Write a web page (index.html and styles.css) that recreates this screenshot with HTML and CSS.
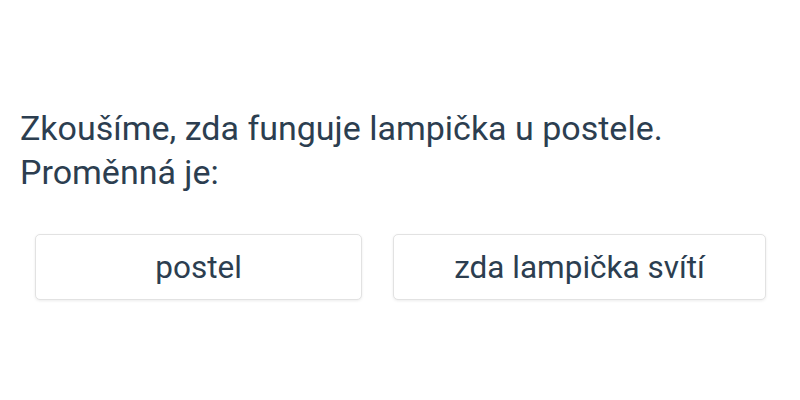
FILE: index.html
```html
<!DOCTYPE html>
<html lang="cs">
<head>
<meta charset="utf-8">
<link rel="stylesheet" href="styles.css">
</head>
<body>
<main class="page">
  <p class="question">Zkoušíme, zda funguje lampička u postele.<br>Proměnná je:</p>
  <div class="options">
    <button class="option option-a">postel</button>
    <button class="option option-b">zda lampička svítí</button>
  </div>
</main>
</body>
</html>
```
FILE: styles.css
```css
html, body {
  margin: 0;
  padding: 0;
  background: #ffffff;
}
.page {
  width: 800px;
  height: 400px;
  box-sizing: border-box;
  padding: 106px 20px 0 20px;
  font-family: Roboto, "Noto Sans", sans-serif;
  color: #2c3e50;
}
.question {
  margin: 0;
  font-size: 34px;
  line-height: 44px;
}
.options {
  display: flex;
  gap: 31px;
  padding: 0 14px 0 15px;
  margin-top: 40px;
}
.option {
  font-family: Roboto, "Noto Sans", sans-serif;
  color: #2c3e50;
  font-size: 31.5px;
  height: 66px;
  background: #fff;
  border: 1px solid #e2e2e2;
  border-radius: 5px;
  box-shadow: 0 1px 3px rgba(0,0,0,0.08);
  padding: 0;
}
.option-a { width: 328px; }
.option-b { width: 374px; }
```
